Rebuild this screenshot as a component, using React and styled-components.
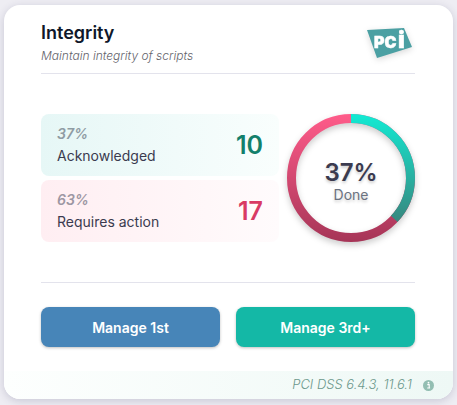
import React from "react";
import styled, { createGlobalStyle } from "styled-components";

const GlobalStyle = createGlobalStyle`
  * {
    box-sizing: border-box;
  }
  body {
    margin: 0;
    padding: 5px 4px 6px;
    background-color: #eeedf3;
    color: #3b3b4f;
    font-family: Inter, "Liberation Sans", sans-serif;
  }
`;

const Card = styled.article`
  overflow: hidden;
  border-radius: 16px;
  background-color: #ffffff;
  box-shadow: 0 2px 8px rgba(50, 50, 93, 0.2);
`;

const Content = styled.div`
  padding: 16px 38px 24px 37px;
`;

const Header = styled.header`
  display: flex;
  justify-content: space-between;
  height: 53px;
  border-bottom: 1px solid #e3e3ec;
`;

const Title = styled.h2`
  margin: 0;
  font-size: 18px;
  line-height: 24px;
  font-weight: 600;
  color: #0f172a;
`;

const Subtitle = styled.p`
  margin: 0;
  font-size: 12px;
  line-height: 22px;
  font-style: italic;
  font-weight: 300;
  color: #64646c;
`;

const Logo = styled.svg`
  width: 52px;
  height: 40px;
  filter: drop-shadow(0 2px 3px rgba(0, 0, 0, 0.15));
`;

const Summary = styled.section`
  display: flex;
  gap: 8px;
  padding: 40px 0;
  border-bottom: 1px solid #e3e3ec;
`;

const Stats = styled.div`
  display: flex;
  flex: 1;
  flex-direction: column;
  gap: 4px;
`;

const Stat = styled.div`
  display: flex;
  align-items: center;
  justify-content: space-between;
  height: 62px;
  padding: 0 16px;
  border-radius: 8px;
  background: linear-gradient(
    to right,
    ${(props) => (props.$done ? "#e6f7f6, #f9fefd" : "#ffeef2, #fffbfc")}
  );
`;

const Percent = styled.div`
  font-size: 14px;
  line-height: 22px;
  font-style: italic;
  font-weight: 600;
  color: ${(props) => (props.$done ? "#8f9ca4" : "#9d97a3")};
`;

const Label = styled.div`
  font-size: 14px;
  line-height: 22px;
`;

const Count = styled.div`
  font-size: 25px;
  line-height: 32px;
  font-weight: 600;
  color: ${(props) => (props.$done ? "#13806b" : "#d93a64")};
`;

const Ring = styled.div`
  display: grid;
  flex: none;
  width: 128px;
  height: 128px;
  > * {
    grid-area: 1 / 1;
  }
`;

const RingChart = styled.svg`
  width: 128px;
  height: 128px;
  overflow: visible;
  filter: drop-shadow(0 3px 3px rgba(0, 0, 0, 0.2));
`;

const RingText = styled.div`
  display: flex;
  flex-direction: column;
  align-items: center;
  justify-content: center;
  padding-top: 10px;
  text-shadow: 0 2px 3px rgba(0, 0, 0, 0.2);
`;

const RingValue = styled.div`
  font-size: 24px;
  line-height: 24px;
  font-weight: 600;
`;

const RingCaption = styled.div`
  font-size: 14px;
  line-height: 20px;
  color: #6b7280;
`;

const Actions = styled.div`
  display: flex;
  gap: 16px;
  padding-top: 24px;
`;

const Button = styled.button`
  flex: 1;
  height: 40px;
  padding: 0;
  border: 0;
  border-radius: 8px;
  background-color: ${(props) => (props.$primary ? "#14b8a6" : "#4785b8")};
  box-shadow: 0 1px 3px rgba(0, 0, 0, 0.25);
  color: #ffffff;
  font-family: inherit;
  font-size: 14px;
  font-weight: 600;
  cursor: pointer;
`;

const Footer = styled.footer`
  display: flex;
  align-items: center;
  justify-content: flex-end;
  gap: 11px;
  height: 28px;
  padding: 0 19px 2px;
  background: linear-gradient(to right, #fdfffe, #eef8f5);
  font-size: 13px;
  font-style: italic;
  font-weight: 300;
  color: #6c988c;
`;

const InfoIcon = styled.svg`
  width: 11px;
  height: 11px;
  margin-top: 2px;
`;

const RADIUS = 59.5;
const LENGTH = 2 * Math.PI * RADIUS;

function PciLogo() {
  return (
    <Logo viewBox="0 0 52 40" role="img" aria-label="PCI">
      <path d="M4 9 41 7 49 26 14 37Z" fill="#4ba0a3" />
      <g
        fill="#ffffff"
        stroke="#ffffff"
        strokeWidth="0.5"
        fontFamily="Inter, sans-serif"
        fontWeight="900"
      >
        <text x="11" y="27" fontSize="16">
          PC
        </text>
        <text x="35" y="27" fontSize="23">
          i
        </text>
      </g>
    </Logo>
  );
}

function ProgressRing({ percent }) {
  const done = (LENGTH * percent) / 100;
  return (
    <Ring>
      <RingChart viewBox="0 0 128 128" aria-hidden="true">
        <defs>
          <linearGradient id="done" gradientUnits="userSpaceOnUse" x1="0" y1="0" x2="0" y2="108">
            <stop offset="0" stopColor="#12ead3" />
            <stop offset="1" stopColor="#38877e" />
          </linearGradient>
          <linearGradient id="open" gradientUnits="userSpaceOnUse" x1="0" y1="0" x2="0" y2="128">
            <stop offset="0" stopColor="#ff5c8a" />
            <stop offset="1" stopColor="#a63557" />
          </linearGradient>
        </defs>
        <circle cx="64" cy="64" r={RADIUS} fill="none" stroke="url(#open)" strokeWidth="9" />
        <path
          d="M64 4.5a59.5 59.5 0 0 1 0 119"
          fill="none"
          stroke="url(#done)"
          strokeWidth="9"
          strokeDasharray={`${done} ${LENGTH}`}
        />
      </RingChart>
      <RingText>
        <RingValue>{percent}%</RingValue>
        <RingCaption>Done</RingCaption>
      </RingText>
    </Ring>
  );
}

function StatRow({ percent, label, count, done }) {
  return (
    <Stat $done={done}>
      <div>
        <Percent $done={done}>{percent}%</Percent>
        <Label>{label}</Label>
      </div>
      <Count $done={done}>{count}</Count>
    </Stat>
  );
}

export default function App() {
  return (
    <>
      <GlobalStyle />
      <Card>
        <Content>
          <Header>
            <div>
              <Title>Integrity</Title>
              <Subtitle>Maintain integrity of scripts</Subtitle>
            </div>
            <PciLogo />
          </Header>
          <Summary>
            <Stats>
              <StatRow percent={37} label="Acknowledged" count={10} done />
              <StatRow percent={63} label="Requires action" count={17} />
            </Stats>
            <ProgressRing percent={37} />
          </Summary>
          <Actions>
            <Button type="button">Manage 1st</Button>
            <Button type="button" $primary>
              Manage 3rd+
            </Button>
          </Actions>
        </Content>
        <Footer>
          PCI DSS 6.4.3, 11.6.1
          <InfoIcon viewBox="0 0 11 11" aria-hidden="true">
            <circle cx="5.5" cy="5.5" r="5.5" fill="#93beb2" />
            <path d="M4.3 4.6h1.9v3.2M4.2 8h2.9" fill="none" stroke="#ffffff" strokeWidth="1.1" />
            <circle cx="5.5" cy="2.7" r="0.9" fill="#ffffff" />
          </InfoIcon>
        </Footer>
      </Card>
    </>
  );
}
